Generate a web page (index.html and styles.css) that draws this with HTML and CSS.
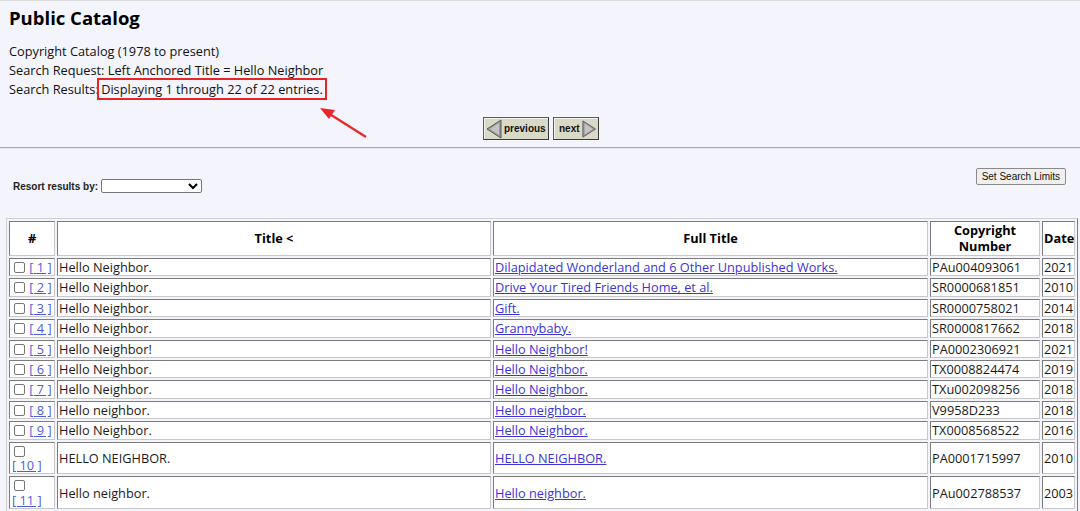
FILE: index.html
```html
<!DOCTYPE html>
<html>
<head>
<meta charset="utf-8">
<title>Public Catalog</title>
<link rel="stylesheet" href="styles.css">
</head>
<body>
<div class="top">
  <h1 class="title">Public Catalog</h1>
  <div class="meta">
    <div>Copyright Catalog (1978 to present)</div>
    <div>Search Request: Left Anchored Title = Hello Neighbor</div>
    <div>Search Results: <span class="hl">Displaying 1 through 22 of 22 entries.</span></div>
  </div>
  <svg class="arrow" width="60" height="40" viewBox="0 0 60 40">
    <line x1="52" y1="34" x2="14" y2="10" stroke="#e8262a" stroke-width="2.2"/>
    <polygon points="6,5 21,7 15,16" fill="#e8262a"/>
  </svg>
</div>

<div class="pager">
  <span class="pbtn prev">
    <svg width="16" height="20" viewBox="0 0 16 20"><polygon points="15,1 1,10 15,19" fill="#9a9a9a" stroke="#5a5a5a" stroke-width="1"/><polygon points="13,4 4,10 13,16" fill="#c4c4c4"/></svg>
    <span>previous</span>
  </span>
  <span class="pbtn next">
    <span>next</span>
    <svg width="16" height="20" viewBox="0 0 16 20"><polygon points="1,1 15,10 1,19" fill="#9a9a9a" stroke="#5a5a5a" stroke-width="1"/><polygon points="3,4 12,10 3,16" fill="#c4c4c4"/></svg>
  </span>
</div>

<hr class="rule">

<div class="tools">
  <label class="resort">Resort results by: <select class="sel"><option></option></select></label>
  <button class="limits">Set Search Limits</button>
</div>

<table class="results">
  <colgroup>
    <col class="w-num"><col class="w-title"><col class="w-full"><col class="w-copy"><col class="w-date">
  </colgroup>
  <tr>
    <th>#</th><th>Title &lt;</th><th>Full Title</th><th>Copyright<br>Number</th><th>Date</th>
  </tr>
  <tr><td class="num"><input type="checkbox" class="cb"> <a href="#">[ 1 ]</a></td><td>Hello Neighbor.</td><td><a href="#">Dilapidated Wonderland and 6 Other Unpublished Works.</a></td><td>PAu004093061</td><td>2021</td></tr>
  <tr><td class="num"><input type="checkbox" class="cb"> <a href="#">[ 2 ]</a></td><td>Hello Neighbor.</td><td><a href="#">Drive Your Tired Friends Home, et al.</a></td><td>SR0000681851</td><td>2010</td></tr>
  <tr><td class="num"><input type="checkbox" class="cb"> <a href="#">[ 3 ]</a></td><td>Hello Neighbor.</td><td><a href="#">Gift.</a></td><td>SR0000758021</td><td>2014</td></tr>
  <tr><td class="num"><input type="checkbox" class="cb"> <a href="#">[ 4 ]</a></td><td>Hello Neighbor.</td><td><a href="#">Grannybaby.</a></td><td>SR0000817662</td><td>2018</td></tr>
  <tr><td class="num"><input type="checkbox" class="cb"> <a href="#">[ 5 ]</a></td><td>Hello Neighbor!</td><td><a href="#">Hello Neighbor!</a></td><td>PA0002306921</td><td>2021</td></tr>
  <tr><td class="num"><input type="checkbox" class="cb"> <a href="#">[ 6 ]</a></td><td>Hello Neighbor.</td><td><a href="#">Hello Neighbor.</a></td><td>TX0008824474</td><td>2019</td></tr>
  <tr><td class="num"><input type="checkbox" class="cb"> <a href="#">[ 7 ]</a></td><td>Hello Neighbor.</td><td><a href="#">Hello Neighbor.</a></td><td>TXu002098256</td><td>2018</td></tr>
  <tr><td class="num"><input type="checkbox" class="cb"> <a href="#">[ 8 ]</a></td><td>Hello neighbor.</td><td><a href="#">Hello neighbor.</a></td><td>V9958D233</td><td>2018</td></tr>
  <tr><td class="num"><input type="checkbox" class="cb"> <a href="#">[ 9 ]</a></td><td>Hello Neighbor.</td><td><a href="#">Hello Neighbor.</a></td><td>TX0008568522</td><td>2016</td></tr>
  <tr><td class="num"><input type="checkbox" class="cb"> <a href="#">[ 10 ]</a></td><td>HELLO NEIGHBOR.</td><td><a href="#">HELLO NEIGHBOR.</a></td><td>PA0001715997</td><td>2010</td></tr>
  <tr><td class="num"><input type="checkbox" class="cb"> <a href="#">[ 11 ]</a></td><td>Hello neighbor.</td><td><a href="#">Hello neighbor.</a></td><td>PAu002788537</td><td>2003</td></tr>
</table>
</body>
</html>
```

FILE: styles.css
```css
html, body {
  margin: 0;
  padding: 0;
}
body {
  background: #f4f4fc;
  border-top: 1px solid #dcdcdc;
  font-family: "Open Sans", "Noto Sans", sans-serif;
  font-size: 12.75px;
  color: #111;
}
.top {
  position: relative;
  padding-left: 9px;
}
.title {
  margin: 0;
  padding-top: 5px;
  font-size: 18.5px;
  line-height: 24px;
  font-weight: 700;
  color: #000;
}
.meta {
  margin-top: 12px;
  line-height: 19px;
}
.hl {
  border: 2px solid #e8262a;
  padding: 0 2px;
  margin-left: -5px;
}
.arrow {
  position: absolute;
  left: 314px;
  top: 102px;
}
.pager {
  display: flex;
  justify-content: center;
  gap: 4px;
  margin-top: 18px;
  padding-left: 2px;
}
.pbtn {
  display: inline-flex;
  align-items: center;
  box-sizing: border-box;
  border: 1px solid #5c5c5c;
  border-right-color: #3a3a3a;
  border-bottom-color: #3a3a3a;
  background: #d9d9c7;
  font-family: "Liberation Sans", Arial, sans-serif;
  font-size: 10px;
  font-weight: 700;
  color: #111;
  padding: 0 2px;
  gap: 2px;
  box-shadow: inset 1px 1px 0 #f2f2ea;
}
.prev { width: 66px; height: 23px; }
.next { width: 46px; height: 23px; padding-left: 5px; }
.rule {
  margin: 7px 0 0;
  border: 0;
  border-top: 1px solid #a9a9a9;
  border-bottom: 1px solid #e6e6ee;
  height: 0;
}
.tools {
  display: flex;
  justify-content: space-between;
  align-items: flex-start;
  padding: 19px 14px 0 13px;
}
.resort {
  margin-top: 11px;
  font-family: "Liberation Sans", Arial, sans-serif;
  font-size: 10px;
  font-weight: 700;
  color: #222;
  display: flex;
  align-items: center;
  gap: 3px;
}
.sel {
  width: 101px;
  height: 14px;
  box-sizing: border-box;
  border: 1px solid #767676;
  border-radius: 2px;
  background: #fff;
  font-size: 9px;
  padding: 0;
}
.limits {
  height: 17px;
  box-sizing: border-box;
  border: 1px solid #8a8a8a;
  border-radius: 2px;
  background: #efefef;
  font-family: "Liberation Sans", Arial, sans-serif;
  font-size: 10px;
  color: #111;
  padding: 0 5px;
}
.results {
  margin: 25px 0 0 6px;
  width: 1071px;
  table-layout: fixed;
  border-collapse: separate;
  border-spacing: 2px;
  border: 1px solid;
  border-color: #d0d0d0 #7c7c7c #7c7c7c #d0d0d0;
  background: #f4f4fc;
}
.w-num { width: 46px; }
.w-title { width: 434px; }
.w-full { width: 435px; }
.w-copy { width: 110px; }
.w-date { width: 33px; }
.results th, .results td {
  background: #fff;
  border: 1px solid;
  border-color: #7c7c7c #c8c8c8 #c8c8c8 #7c7c7c;
  padding: 1px;
  line-height: 14.4px;
  color: #1a1a1a;
  overflow: hidden;
}
.results th {
  font-weight: 700;
  line-height: 16px;
  color: #000;
  text-align: center;
  padding: 0 1px 1px;
}
.results td {
  text-align: left;
  white-space: normal;
}
.results td.num {
  padding-left: 2px;
}
.results a {
  color: #3b33d6;
  text-decoration: underline;
}
.results td.num a {
  color: #4d5be0;
  white-space: nowrap;
}
.cb {
  -webkit-appearance: none;
  appearance: none;
  width: 11px;
  height: 11px;
  margin: 0 1px 0 2px;
  border: 1px solid #767676;
  border-radius: 2px;
  background: #fff;
  vertical-align: -1px;
  box-sizing: border-box;
}
```
